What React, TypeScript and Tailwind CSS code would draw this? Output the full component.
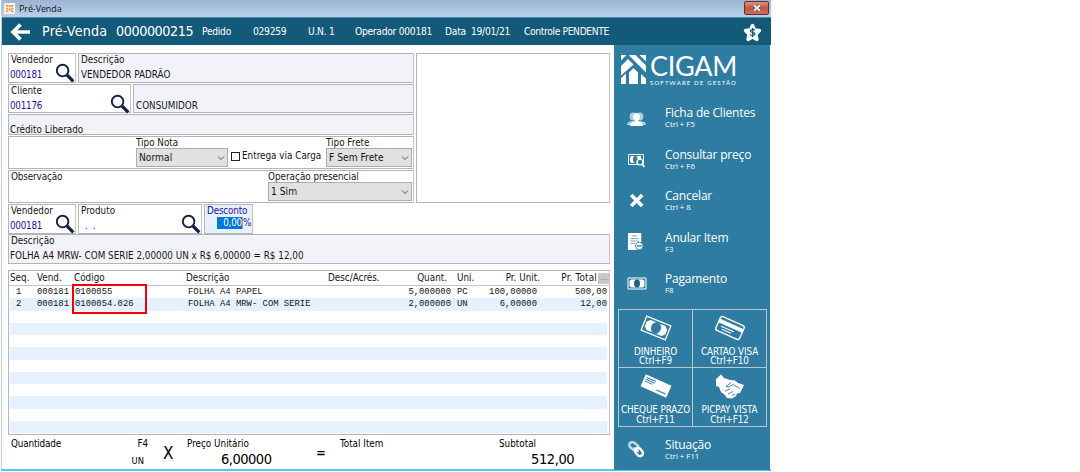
import { ReactNode } from "react";
import clsx from "clsx";

const items = [
  { seq: "1", vend: "000181", code: "0100055", desc: "FOLHA A4 PAPEL", qty: "5,000000", unit: "PC", price: "100,00000", total: "500,00" },
  { seq: "2", vend: "000181", code: "0100054.026", desc: "FOLHA A4 MRW- COM SERIE", qty: "2,000000", unit: "UN", price: "6,00000", total: "12,00" },
];

const ROWS = 12;

function Box({ className, children }: { className?: string; children?: ReactNode }) {
  return (
    <div className={clsx("box-border border border-[#b4b4b4] border-r-[#c4c4c4] shrink-0", className)}>{children}</div>
  );
}

function Lens() {
  return (
    <svg className="h-5 w-5 shrink-0" viewBox="0 0 20 20" fill="none">
      <circle cx="7.6" cy="7.6" r="5.8" stroke="#14204a" strokeWidth="1.9" />
      <path d="M12 12l6.3 6.3" stroke="#14204a" strokeWidth="3.2" />
    </svg>
  );
}

function LookupField({ label, value, className }: { label: string; value: string; className: string }) {
  return (
    <Box className={clsx("flex justify-between bg-white pl-[2px]", className)}>
      <div className="w-[40px]">
        <div className="leading-[12px]">{label}</div>
        <div className="mt-[2px] -ml-px whitespace-pre leading-[13px] tracking-[-0.25px] text-[#1c12a0]">{value}</div>
      </div>
      <div className="pt-[9px]">
        <Lens />
      </div>
    </Box>
  );
}

function Select({ value, className }: { value: string; className: string }) {
  return (
    <div className={clsx("flex items-center justify-between border border-[#adadad] bg-[#e1e1e1] pl-[2px] pr-[2px]", className)}>
      <span className="text-[10.2px]">{value}</span>
      <svg className="h-2 w-2" viewBox="0 0 8 8" fill="none" stroke="#505050">
        <path d="M1 2.5l3 3 3-3" />
      </svg>
    </div>
  );
}

function PeopleIcon() {
  return (
    <svg className="h-[15px] w-[19px]" viewBox="0 0 19 15">
      <g fill="#a9cfe6">
        <ellipse cx="6" cy="4.6" rx="3.3" ry="4" />
        <ellipse cx="13" cy="4.6" rx="3.3" ry="4" />
        <path d="M0 13c0-3 3-3.500 5-4h9c2 .5 5 1 5 4z" />
      </g>
      <path fill="#fff" d="M9.500 1c2.400 0 3.600 1.700 3.400 4-.1 1.500-.8 2.600-1.500 3.400v1.200c2 .8 4.600 1.200 4.600 4.400H3c0-3.200 2.600-3.600 4.600-4.400V8.400C6.900 7.600 6.200 6.500 6.100 5 5.900 2.700 7.100 1 9.500 1z" />
    </svg>
  );
}

function PriceIcon() {
  return (
    <svg className="h-[15px] w-[19px]" viewBox="0 0 19 15">
      <path d="M1.500 1.500h15v10h-15z" fill="none" stroke="#fff" />
      <path d="M4 3h10v7H4l-1-2V5z" fill="#fff" />
      <ellipse cx="8.300" cy="6.500" rx="2.400" ry="3.400" fill="#2f7ca2" />
      <circle cx="13" cy="9" r="2.900" fill="#2f7ca2" stroke="#fff" strokeWidth="1.300" />
      <path d="M15 11.200l2.500 2.800" stroke="#fff" strokeWidth="1.600" />
    </svg>
  );
}

function CancelIcon() {
  return (
    <svg className="mb-[4px] h-[15px] w-[19px]" viewBox="0 0 19 15">
      <path d="M4.200 2l11 11M15.200 2l-11 11" stroke="#fff" strokeWidth="3.700" />
    </svg>
  );
}

function VoidIcon() {
  return (
    <svg className="mb-[4px] h-[19px] w-[18px]" viewBox="0 0 19 20">
      <path d="M1 1h14v18H1z" fill="#fff" />
      <path d="M5.500 4h5M3.500 7h9M3.500 9.500h9M3.500 12h5" stroke="#6fa6c2" />
      <circle cx="13" cy="14.700" r="4" fill="#fff" stroke="#2f7ca2" />
      <path d="M10.500 14.700h5" stroke="#2f7ca2" strokeWidth="1.500" />
    </svg>
  );
}

function BillIcon() {
  return (
    <svg className="mb-[4px] h-[13px] w-[20px]" viewBox="0 0 20 13">
      <path d="M1 1h18v11H1z" fill="#2f7ca2" stroke="#fff" />
      <path d="M4 2.500h12l1.500 1.500v5L16 10.500H4L2.500 9V4z" fill="#fff" />
      <ellipse cx="10" cy="6.500" rx="3" ry="4" fill="#225f85" />
    </svg>
  );
}

function LinkIcon() {
  return (
    <svg className="mb-[2px] h-[18px] w-[19px]" viewBox="0 0 19 18" fill="none">
      <rect x="1.500" y="2.500" width="10" height="6" rx="3" transform="rotate(38 7 6)" stroke="#bcd8e7" strokeWidth="2.600" />
      <rect x="7.500" y="8" width="9" height="6" rx="3" transform="rotate(52 12 11)" stroke="#fff" strokeWidth="2.400" />
      <path d="M7 6.500l4.500 4.500" stroke="#fff" strokeWidth="1.500" />
    </svg>
  );
}

const actions = [
  { icon: <PeopleIcon />, label: "Ficha de Clientes", key: "Ctrl + F5" },
  { icon: <PriceIcon />, label: "Consultar preço", key: "Ctrl + F6" },
  { icon: <CancelIcon />, label: "Cancelar", key: "Ctrl + 8" },
  { icon: <VoidIcon />, label: "Anular Item", key: "F3" },
  { icon: <BillIcon />, label: "Pagamento", key: "F8" },
];

function Action({ icon, label, keys }: { icon: ReactNode; label: string; keys: string }) {
  return (
    <div className="flex h-[41.5px] pl-[13px] font-['Open_Sans',sans-serif] text-white [font-stretch:normal]">
      <div className="flex h-[28px] w-[38px] items-center">{icon}</div>
      <div className="whitespace-nowrap">
        <div className="text-[12px] leading-[15px] tracking-[-0.2px]">{label}</div>
        <div className="text-[7.800px] leading-[9px] tracking-normal">{keys}</div>
      </div>
    </div>
  );
}

const payments = [
  {
    label: "DINHEIRO",
    key: "Ctrl+F9",
    icon: (
      <g transform="rotate(22 16 14)">
        <path d="M3 6.500h26v15H3z" fill="none" stroke="#fff" strokeWidth="1.300" />
        <path d="M8 8.500h16l3 3v5l-3 3H8l-3-3v-5z" fill="#fff" />
        <ellipse cx="16" cy="14" rx="5" ry="5.800" fill="#2f7ca2" />
      </g>
    ),
  },
  {
    label: "CARTAO VISA",
    key: "Ctrl+F10",
    icon: (
      <g transform="rotate(24 16 14)">
        <rect x="3" y="6.500" width="26" height="15" rx="2" fill="none" stroke="#fff" strokeWidth="1.400" />
        <path d="M3 9.500h26v4H3z" fill="#fff" />
        <path d="M7 16h14M9 18.500h10" stroke="#fff" strokeWidth="1.100" />
      </g>
    ),
  },
  {
    label: "CHEQUE PRAZO",
    key: "Ctrl+F11",
    icon: (
      <g transform="rotate(24 16 14)">
        <path d="M2 7.500h28v13H2z" fill="#fff" />
        <path d="M4 10h10M4 12h10M4 14h8M18 17.500h10" stroke="#2f7ca2" />
      </g>
    ),
  },
  {
    label: "PICPAY VISTA",
    key: "Ctrl+F12",
    icon: (
      <g>
        <path d="M2 7l5-4.500 3 3.500 6 2 5 .5 3 2.500 6 2-4 8-3 .5-1 2.500-4 2.500-5-.5-2-3-4-3-2-5-3-1z" fill="#fff" />
        <path d="M17 10.500l-5 4 3 .5 4-2.500 7 4M11 19l5-2M14 22l5-2.500M18 23.500l3-1.500" stroke="#2f7ca2" strokeWidth="0.900" fill="none" />
      </g>
    ),
  },
];

function Logo() {
  return (
    <div className="flex h-[30px] pl-[7px] text-white">
      <svg className="h-[30px] w-[25px]" viewBox="0 0 25 30" fill="#fff">
        <path d="M0 0h5.500L0 5.500zM8.500 0h6L25 10.500v7L8.500 1zM18.500 0H25v6.500zM7 4l5.500 5.500L0 20.500V11zM0 23l5-4.500V29H0zM12.500 13l4.500 4.500V29H8V17.500zM20 19l5 4.500V29h-5z" />
      </svg>
      <div className="ml-[4px]">
        <div className="h-[23px] font-['Lato',sans-serif] text-[27px] leading-[22px] tracking-[-0.3px]">CIGAM</div>
        <div className="mt-px whitespace-nowrap font-['Lato',sans-serif] text-[6px] leading-[7px] tracking-[1.15px]">SOFTWARE DE GESTÃO</div>
      </div>
    </div>
  );
}

function Sidebar() {
  return (
    <aside className="flex h-[425px] w-[156px] shrink-0 flex-col bg-[#2f7ca2] pt-[10px]">
      <Logo />
      <div className="mt-[20px]">
        {actions.map((a) => (
          <Action key={a.label} icon={a.icon} label={a.label} keys={a.key} />
        ))}
      </div>
      <div className="-mt-[4px] ml-[4px] grid h-[118px] w-[149px] shrink-0 grid-cols-2 grid-rows-2 border-l border-t border-[#c0c4c8]">
        {payments.map((p) => (
          <div key={p.label} className="flex flex-col items-center whitespace-nowrap border-b border-r border-[#c0c4c8] pt-[4px] text-[9.8px] leading-[9.5px] tracking-[-0.1px] text-white">
            <svg className="mb-[5px] h-[28px] w-[32px] shrink-0" viewBox="0 0 32 28">{p.icon}</svg>
            <span>{p.label}</span>
            <span>{p.key}</span>
          </div>
        ))}
      </div>
      <div className="mt-[10px]">
        <Action icon={<LinkIcon />} label="Situação" keys="Ctrl + F11" />
      </div>
    </aside>
  );
}

function ItemsTable() {
  return (
    <Box className="mt-[6px] h-[165px] w-[602px] bg-white">
      <div className="flex h-[15px] items-center border-b border-[#c4c4c4] pl-px text-[9.8px]">
        <span className="w-[27px]">Seq.</span>
        <span className="w-[37px]">Vend.</span>
        <span className="w-[112px]">Código</span>
        <span className="w-[142px]">Descrição</span>
        <span className="w-[60px]">Desc/Acrés.</span>
        <span className="w-[59px] text-right">Quant.</span>
        <span className="w-[40px] pl-[10px]">Uni.</span>
        <span className="w-[53px] text-right">Pr. Unit.</span>
        <span className="w-[57px] text-right tracking-[0.2px]">Pr. Total</span>
        <span className="ml-px h-[11px] w-[11px] bg-[#c8c8c8] text-center text-[8px] leading-[9px] text-gray-500">…</span>
      </div>
      <div className="ml-px w-[597px] font-['Liberation_Mono',monospace] text-[8.9px] tracking-normal">
        {Array.from({ length: ROWS }, (_, i) => {
          const item = items[i];
          return (
            <div key={i} className={clsx("flex h-[12.25px] items-center pt-px", i % 2 === 1 && "bg-[#e5f1ff]")}>
              {item && (
                <>
                  <span className="w-[27px] pl-[6px]">{item.seq}</span>
                  <span className="w-[38px]">{item.vend}</span>
                  <span className="w-[113px]">{item.code}</span>
                  <span className="w-[160px]">{item.desc}</span>
                  <span className="w-[103px] text-right">{item.qty}</span>
                  <span className="w-[33px] pl-[6px]">{item.unit}</span>
                  <span className="w-[53px] text-right">{item.price}</span>
                  <span className="w-[70px] text-right">{item.total}</span>
                </>
              )}
            </div>
          );
        })}
      </div>
    </Box>
  );
}

function Header() {
  return (
    <header className="flex h-[28px] items-center border-t border-[#4d86a6] bg-[#12597a] pl-[8px] pt-px text-[10.200px] tracking-[-0.27px] text-white">
      <svg className="h-[18px] w-[20px]" viewBox="0 0 20 18" fill="none" stroke="#fff" strokeWidth="3.600">
        <path d="M10.500 1.500L3 9l7.500 7.500M3 9h17" />
      </svg>
      <span className="ml-[12px] w-[74px] text-[14.200px] tracking-[0.2px]">Pré-Venda</span>
      <span className="w-[86px] text-[14.200px] tracking-[-0.4px]">0000000215</span>
      <span className="w-[51px]">Pedido</span>
      <span className="w-[55px]">029259</span>
      <span className="w-[47px]">U.N. 1</span>
      <span className="w-[90px]">Operador 000181</span>
      <span className="w-[26px]">Data</span>
      <span className="w-[53px]">19/01/21</span>
      <span className="w-[219px] tracking-[-0.35px]">Controle PENDENTE</span>
      <svg className="h-[19px] w-[19px]" viewBox="0 0 19 19">
        <path d="M9.500 2.500l2 4.500 5 .5-3.700 3.700 1.200 5.300-4.500-2.500L5 16.500l1.200-5.300L2.500 7.500l5-.5z" fill="#fff" stroke="#fff" strokeWidth="3.400" strokeLinejoin="round" />
        <path d="M11.800 7.200c-.8-1-4.400-1-4.400.8 0 1.900 4.500 1 4.500 3 0 1.800-3.800 1.800-4.700.7M9.600 5v9" stroke="#12597a" strokeWidth="1.300" fill="none" />
      </svg>
    </header>
  );
}

export default function App() {
  return (
    <div className="flex h-[472px] w-[1080px] overflow-hidden bg-white font-['DejaVu_Sans_Condensed','DejaVu_Sans',sans-serif] text-[9.800px] tracking-[0.010px] text-[#161616] [font-stretch:condensed]">
      <div className="ml-px h-[471px] w-[770px] whitespace-nowrap border-b-2 border-l border-b-[#4fc9e8] border-l-[#b9d1e3]">
        <div className="flex h-[17px] items-center justify-between bg-gradient-to-b from-[#9ab4d2] to-[#b9d1ea] pl-[2px] pr-[2px]">
          <div className="flex items-center">
            <svg className="h-[11px] w-[11px]" viewBox="0 0 11 11">
              <path d="M0 0h11v11H0z" fill="#fff1e6" />
              <path d="M2 2l2 1.500M5.500 2v2M9 2L7 4M2 5l2 1M9 5L7 6.500M5.500 5.500v2M2 9l2-1.500M9 9L7 7.500" stroke="#f07830" strokeWidth="1.300" fill="none" />
            </svg>
            <span className="ml-[4px] font-['Open_Sans',sans-serif] text-[9px] tracking-[-0.1px] [font-stretch:normal]">Pré-Venda</span>
          </div>
          <div className="mb-px flex h-[14px] w-[25px] items-center justify-center rounded-[2px] border border-[#6d2a2a] bg-gradient-to-b from-[#dc9585] via-[#c4533d] to-[#c9705a]">
            <svg className="h-[8px] w-[10px]" viewBox="0 0 10 8">
              <path d="M2 1.200l6 5.600M8 1.200L2 6.800" stroke="#535666" strokeWidth="3" />
              <path d="M2 1.200l6 5.600M8 1.200L2 6.800" stroke="#fff" strokeWidth="1.700" />
            </svg>
          </div>
        </div>
        <Header />
        <div className="flex">
          <main className="flex h-[424px] w-[612px] shrink-0 flex-col pl-[6px] pt-[8px]">
            <div className="flex gap-[2px]">
              <div className="flex w-[406px] flex-col">
                <div className="flex gap-[2px]">
                  <LookupField label="Vendedor" value="000181" className="h-[30px] w-[68px]" />
                  <Box className="h-[30px] w-[336px] bg-[#f2f3f9] pl-[2px]">
                    <div className="leading-[12px]">Descrição</div>
                    <div className="mt-[2px] leading-[13px]">VENDEDOR PADRÃO</div>
                  </Box>
                </div>
                <div className="mt-px flex gap-[2px]">
                  <LookupField label="Cliente" value="001176" className="h-[29px] w-[123px]" />
                  <Box className="h-[29px] w-[281px] bg-[#f2f3f9] pl-[2px] pt-[14px] leading-[13px]">CONSUMIDOR</Box>
                </div>
                <Box className="mt-px h-[21px] bg-[#f2f3f9] pl-px pt-[9px] leading-[12px]">Crédito Liberado</Box>
                <Box className="mt-px flex h-[33px] pl-[127px]">
                  <div className="w-[95px]">
                    <div className="h-[11px] leading-[12px]">Tipo Nota</div>
                    <Select value="Normal" className="h-[19px] w-[92px]" />
                  </div>
                  <div className="flex w-[95px] items-center pt-[8px]">
                    <span className="mr-[2px] h-[9px] w-[9px] shrink-0 border border-[#222]" />
                    <span>Entrega via Carga</span>
                  </div>
                  <div>
                    <div className="h-[11px] leading-[12px]">Tipo Frete</div>
                    <Select value="F Sem Frete" className="h-[19px] w-[86px]" />
                  </div>
                </Box>
                <Box className="mt-px flex h-[33px] pl-[2px]">
                  <div className="w-[257px] leading-[12px] tracking-[-0.12px]">Observação</div>
                  <div>
                    <div className="h-[11px] leading-[12px]">Operação presencial</div>
                    <Select value="1 Sim" className="h-[19px] w-[144px]" />
                  </div>
                </Box>
              </div>
              <Box className="h-[150px] w-[194px]" />
            </div>
            <div className="mt-px flex gap-[2px]">
              <LookupField label="Vendedor" value="000181" className="h-[30px] w-[68px]" />
              <LookupField label="Produto" value="  .  ." className="h-[30px] w-[124px]" />
              <Box className="h-[30px] w-[49px] bg-[#e6f1ff] pl-[2px] text-[#1c12a0]">
                <div className="leading-[12px] tracking-[-0.15px]">Desconto</div>
                <div className="flex pl-[10px] leading-[12px] tracking-[-0.2px]">
                  <span className="w-[26px] border-r border-[#f08030] bg-[#0078d7] text-right text-white">0,00</span>
                  <span>%</span>
                </div>
              </Box>
            </div>
            <Box className="h-[30px] w-[602px] bg-[#f2f3f9] pl-px">
              <div className="pl-px leading-[12px]">Descrição</div>
              <div className="mt-[2px] leading-[13px]">FOLHA A4 MRW- COM SERIE 2,00000 UN x R$ 6,00000 = R$ 12,00</div>
            </Box>
            <ItemsTable />
            <footer className="flex pl-[3px] pt-[2px] text-black">
              <div className="w-[137px] text-right">
                <div className="flex justify-between leading-[13px] tracking-[-0.15px]">
                  <span>Quantidade</span>
                  <span>F4</span>
                </div>
                <div className="mt-[4px] pr-[4px] text-[9.300px] leading-[13px]">UN</div>
              </div>
              <div className="ml-[15px] w-[24px] pt-[6px] text-[17px] leading-[20px]">X</div>
              <div className="w-[129px]">
                <div className="leading-[13px]">Preço Unitário</div>
                <div className="pl-[34px] text-[14.500px] leading-[18px] tracking-[-0.5px]">6,00000</div>
              </div>
              <div className="w-[24px] pt-[6px] text-[13px] font-bold leading-[20px]">=</div>
              <div className="w-[159px] leading-[13px]">Total Item</div>
              <div>
                <div className="leading-[13px]">Subtotal</div>
                <div className="pl-[32px] text-[14.500px] leading-[18px] tracking-[-0.4px]">512,00</div>
              </div>
            </footer>
          </main>
          <Sidebar />
        </div>
      </div>
      {/* callout around the product codes */}
      <div className="absolute left-[72px] top-[284px] h-[30px] w-[75px] border-2 border-[#f0000c]" />
    </div>
  );
}
